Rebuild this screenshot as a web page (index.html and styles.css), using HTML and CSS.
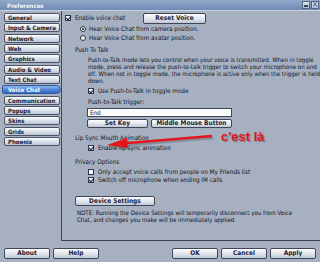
FILE: index.html
```html
<!DOCTYPE html>
<html lang="en">
  <head>
    <meta charset="UTF-8" />
    <title>Preferences</title>
    <link rel="stylesheet" href="styles.css">
  </head>
  <body>
    <div class="window">
      <!-- title bar -->
      <div class="titlebar">
        <span>Preferences</span>
        <div class="ctrls">
          <span class="ctrl min"></span>
          <span class="ctrl close">×</span>
        </div>
      </div>

      <div class="main">
        <!-- left tabs -->
        <ul class="tabs">
          <li>General</li>
          <li>Input &amp; Camera</li>
          <li>Network</li>
          <li>Web</li>
          <li>Graphics</li>
          <li>Audio &amp; Video</li>
          <li>Text Chat</li>
          <li class="current">Voice Chat</li>
          <li>Communication</li>
          <li>Popups</li>
          <li>Skins</li>
          <li>Grids</li>
          <li>Phoenix</li>
        </ul>

        <!-- voice chat panel -->
        <div class="panel">
          <div class="row-top">
            <label class="check-line top-check"><span class="cb on"></span>Enable voice chat</label>
            <button class="btn reset">Reset Voice</button>
          </div>
          <div class="radio-line"><span class="rb on"></span>Hear Voice Chat from camera position.</div>
          <div class="radio-line"><span class="rb"></span>Hear Voice Chat from avatar position.</div>

          <div class="heading ptt">Push To Talk</div>
          <p class="para">Push-to-Talk mode lets you control when your voice is transmitted. When in toggle<br>mode, press and release the push-to-talk trigger to switch your microphone on and<br>off. When not in toggle mode, the microphone is active only when the trigger is held<br>down.</p>
          <div class="check-line sub toggle"><span class="cb on"></span>Use Push-to-Talk in toggle mode</div>
          <div class="label sub trigger">Push-to-Talk trigger:</div>
          <div class="input">End</div>
          <div class="btn-row">
            <button class="btn setkey">Set Key</button>
            <button class="btn middle">Middle Mouse Button</button>
          </div>

          <div class="heading lip">Lip Sync Mouth Animation</div>
          <div class="check-line sub lipcheck"><span class="cb on"></span>Enable lip sync animation</div>

          <div class="heading privacy">Privacy Options</div>
          <div class="check-line sub only"><span class="cb"></span>Only accept voice calls from people on My Friends list</div>
          <div class="check-line sub"><span class="cb on"></span>Switch off microphone when ending IM calls</div>

          <button class="btn device">Device Settings</button>
          <p class="note">NOTE: Running the Device Settings will temporarily disconnect you from Voice<br>Chat, and changes you make will be immediately applied.</p>
        </div>
      </div>

      <!-- bottom buttons -->
      <div class="footer">
        <div class="group">
          <button class="btn foot">About</button>
          <button class="btn foot">Help</button>
        </div>
        <div class="group">
          <button class="btn foot">OK</button>
          <button class="btn foot">Cancel</button>
          <button class="btn foot">Apply</button>
        </div>
      </div>

      <!-- red annotation -->
      <svg class="annot" width="320" height="262" viewBox="0 0 320 262">
        <g transform="translate(1.5 2)" fill="#5c6270" stroke="#5c6270" opacity="0.45">
          <line x1="212" y1="136" x2="122" y2="143.5" stroke-width="2.4" />
          <polygon points="107,145 127,138 128,148" stroke="none" />
        </g>
        <line x1="212" y1="136" x2="122" y2="143.5" stroke="#e3141c" stroke-width="2.4" />
        <polygon points="107,145 127,138 128,148" fill="#e3141c" />
      </svg>
      <div class="annot-text">c'est là</div>
    </div>
  </body>
</html>
```

FILE: styles.css
```css
* {
  box-sizing: border-box;
}
body {
  margin: 0;
  background: #a7b0c1;
  font-family: "DejaVu Sans Condensed", "DejaVu Sans", sans-serif;
  color: #0e1422;
}
.window {
  position: relative;
  width: 320px;
  height: 262px;
  background: #a7b0c1;
  overflow: hidden;
}

/* title bar */
.titlebar {
  height: 11px;
  display: flex;
  align-items: center;
  justify-content: space-between;
  padding-left: 7px;
  background: linear-gradient(#91a9ca, #6f8cb6);
  border-bottom: 1px solid #c9d2df;
  color: #eef3fa;
  font-size: 6px;
  font-weight: bold;
}
.ctrls {
  display: flex;
  gap: 1px;
  padding-right: 1px;
  align-self: flex-start;
  padding-top: 1px;
}
.ctrl {
  width: 8px;
  height: 8px;
  border: 1px solid #56647c;
  background: linear-gradient(#e2e8f1, #aebbd0);
  color: #39465c;
  font-size: 8px;
  line-height: 6px;
  text-align: center;
  font-weight: normal;
}
.min {
  position: relative;
}
.min::after {
  content: "";
  position: absolute;
  left: 1px;
  right: 1px;
  bottom: 1px;
  height: 2px;
  background: #39465c;
}

/* main */
.main {
  display: flex;
  height: 230px;
}
.tabs {
  width: 63px;
  margin: 0;
  padding: 2px 1px 0 4px;
  list-style: none;
  display: flex;
  flex-direction: column;
  gap: 1.33px;
}
.tabs li {
  height: 9px;
  border: 1px solid #4b5466;
  border-radius: 2px;
  background: linear-gradient(#fbfcfe, #d5dce7 60%, #bcc5d4);
  font-size: 6px;
  font-weight: bold;
  line-height: 7px;
  padding-left: 3px;
  color: #1b2233;
  white-space: nowrap;
}
.tabs li.current {
  margin-left: -2px;
  margin-right: -1px;
  border-color: #2f5797;
  border-radius: 2px 5px 5px 2px;
  background: linear-gradient(#8cb8f0, #4a80d2 60%, #356bc2);
  color: #f4f8ff;
  padding-left: 5px;
}

.panel {
  flex: 1;
  border-left: 1px solid #3d4556;
  border-bottom: 1px solid #3d4556;
  font-size: 6.3px;
  line-height: 8px;
}

.btn {
  display: block;
  margin: 0;
  padding: 0;
  border: 1px solid #3e4658;
  border-radius: 2px;
  background: linear-gradient(#fdfdfe, #dfe4ec 55%, #bfc7d4);
  font-family: "DejaVu Sans Condensed", "DejaVu Sans", sans-serif;
  font-size: 6.5px;
  font-weight: bold;
  color: #1c2337;
  text-align: center;
}

.row-top {
  display: flex;
  height: 12px;
  margin-top: 1px;
  padding-left: 3px;
  align-items: center;
}
.top-check {
  width: 78px;
}
.reset {
  width: 63px;
  height: 11px;
  line-height: 9px;
}

.check-line,
.radio-line {
  display: flex;
  align-items: center;
  height: 8px;
  white-space: nowrap;
}
.cb {
  position: relative;
  width: 6px;
  height: 6px;
  margin-right: 4px;
  border: 1px solid #2f3646;
  background: #f4f6fa;
  flex: none;
}
.cb.on::after {
  content: "";
  position: absolute;
  left: 1px;
  top: -1px;
  width: 2px;
  height: 4px;
  border-right: 1.3px solid #1a2030;
  border-bottom: 1.3px solid #1a2030;
  transform: rotate(40deg);
}
.radio-line {
  height: 9px;
  padding-left: 18px;
}
.rb {
  position: relative;
  width: 6px;
  height: 6px;
  margin-right: 3px;
  border: 1px solid #2f3646;
  border-radius: 50%;
  background: #eef1f6;
  flex: none;
}
.rb.on::after {
  content: "";
  position: absolute;
  left: 1px;
  top: 1px;
  width: 2px;
  height: 2px;
  border-radius: 50%;
  background: #1a2030;
}

.heading {
  padding-left: 13px;
  height: 8px;
}
.ptt {
  margin-top: 4px;
}
.para {
  margin: 1.5px 0 0 26px;
  line-height: 7.2px;
  font-size: 6.1px;
  white-space: nowrap;
}
.sub {
  padding-left: 26px;
}
.toggle {
  margin-top: 2.7px;
}
.trigger {
  margin-top: 3px;
  height: 8px;
}
.input {
  margin: 2px 0 0 25px;
  width: 145px;
  height: 9px;
  border: 1px solid #3e4658;
  background: #fbfcfd;
  padding-left: 2px;
  line-height: 7px;
}
.btn-row {
  display: flex;
  gap: 3px;
  margin: 2px 0 0 25px;
}
.btn-row .btn {
  height: 9px;
  line-height: 7px;
}
.setkey {
  width: 61px;
}
.middle {
  width: 81px;
}
.lip {
  margin-top: 6px;
}
.lipcheck {
  margin-top: 1.5px;
}
.privacy {
  margin-top: 6.5px;
}
.only {
  margin-top: 2px;
}
.device {
  margin: 12px 0 0 13px;
  width: 80px;
  height: 10px;
  line-height: 8px;
}
.note {
  margin: 2.5px 0 0 15px;
  line-height: 7px;
  font-size: 6.1px;
  white-space: nowrap;
}

/* footer */
.footer {
  display: flex;
  justify-content: space-between;
  padding: 7px 4px 0 4px;
}
.group {
  display: flex;
  gap: 3px;
}
.foot {
  width: 46px;
  height: 11px;
  line-height: 9px;
}

/* annotation drawn over the screenshot */
.annot {
  position: absolute;
  left: 0;
  top: 0;
}
.annot-text {
  position: absolute;
  left: 221px;
  top: 129px;
  font-family: "Liberation Sans", Arial, sans-serif;
  font-size: 13px;
  font-weight: bold;
  color: #e3141c;
  text-shadow: 1px 1px 1px rgba(60, 60, 70, 0.45);
}
```
